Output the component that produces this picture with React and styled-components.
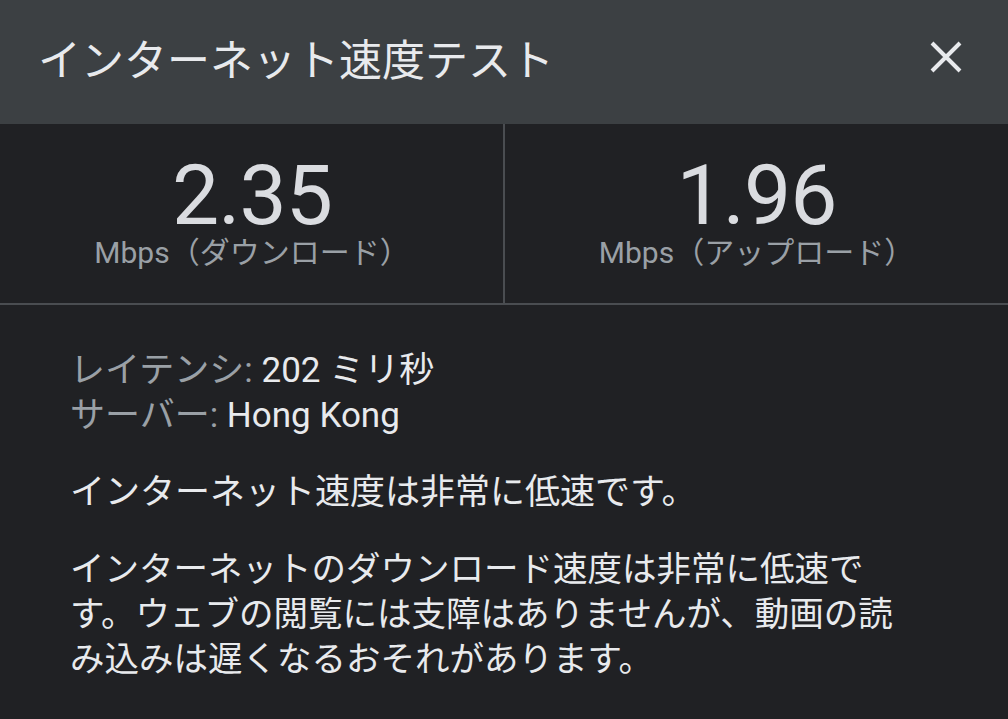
import React from "react";
import styled, { createGlobalStyle } from "styled-components";

const GlobalStyle = createGlobalStyle`
  html, body {
    margin: 0;
    padding: 0;
    background: #202124;
  }
  body {
    font-family: Roboto, "Noto Sans CJK JP", sans-serif;
    -webkit-font-smoothing: antialiased;
  }
`;

const Dialog = styled.div`
  width: 1008px;
  min-height: 719px;
  background: #202124;
  color: #e8eaed;
  overflow: hidden;
`;

const Header = styled.header`
  height: 124px;
  box-sizing: border-box;
  background: #3c4043;
  display: flex;
  align-items: center;
  justify-content: space-between;
  padding: 0 38px 10px 38px;
`;

const Title = styled.h1`
  margin: 0;
  font-size: 43px;
  font-weight: 400;
  color: #e8eaed;
`;

const CloseButton = styled.button`
  width: 48px;
  height: 48px;
  border: none;
  background: transparent;
  padding: 0;
  display: flex;
  align-items: center;
  justify-content: center;
  cursor: pointer;
`;

const Stats = styled.section`
  display: grid;
  grid-template-columns: 1fr 1fr;
  height: 179px;
  border-bottom: 2px solid #4a4d51;
`;

const StatCell = styled.div`
  display: flex;
  flex-direction: column;
  align-items: center;
  padding-top: 36px;
  border-left: ${(p) => (p.$divider ? "2px solid #4a4d51" : "none")};
  margin-left: ${(p) => (p.$divider ? "-1px" : "0")};
`;

const StatValue = styled.div`
  font-family: Roboto, sans-serif;
  font-size: 84px;
  line-height: 72px;
  color: #dadce0;
  letter-spacing: -1px;
`;

const StatLabel = styled.div`
  font-size: 30px;
  line-height: 38px;
  color: #9aa0a6;
  margin-top: 2px;
`;

const Body = styled.section`
  padding: 43px 70px 20px 70px;
  font-size: 35px;
  line-height: 45px;
`;

const InfoList = styled.div`
  margin-bottom: 32px;
`;

const InfoRow = styled.div`
  color: #e8eaed;
`;

const InfoKey = styled.span`
  color: #9aa0a6;
`;

const Paragraph = styled.p`
  margin: 0 0 32px 0;
  font-size: ${(p) => p.$size || "35px"};
  color: #e8eaed;
  white-space: nowrap;
`;

const CloseIcon = () => (
  <svg width="34" height="34" viewBox="0 0 34 34">
    <path
      d="M3 3 L31 31 M31 3 L3 31"
      stroke="#e8eaed"
      strokeWidth="4"
      strokeLinecap="butt"
    />
  </svg>
);

const stats = [
  { value: "2.35", label: "Mbps（ダウンロード）" },
  { value: "1.96", label: "Mbps（アップロード）" },
];

export default function App() {
  return (
    <>
      <GlobalStyle />
      <Dialog>
        <Header>
          <Title>インターネット速度テスト</Title>
          <CloseButton aria-label="閉じる">
            <CloseIcon />
          </CloseButton>
        </Header>
        <Stats>
          {stats.map((s, i) => (
            <StatCell key={s.label} $divider={i === 1}>
              <StatValue>{s.value}</StatValue>
              <StatLabel>{s.label}</StatLabel>
            </StatCell>
          ))}
        </Stats>
        <Body>
          <InfoList>
            <InfoRow>
              <InfoKey>レイテンシ: </InfoKey>202 ミリ秒
            </InfoRow>
            <InfoRow>
              <InfoKey>サーバー: </InfoKey>Hong Kong
            </InfoRow>
          </InfoList>
          <Paragraph>インターネット速度は非常に低速です。</Paragraph>
          <Paragraph $size="34.5px">
            インターネットのダウンロード速度は非常に低速で
            <br />
            す。ウェブの閲覧には支障はありませんが、動画の読
            <br />
            み込みは遅くなるおそれがあります。
          </Paragraph>
        </Body>
      </Dialog>
    </>
  );
}
